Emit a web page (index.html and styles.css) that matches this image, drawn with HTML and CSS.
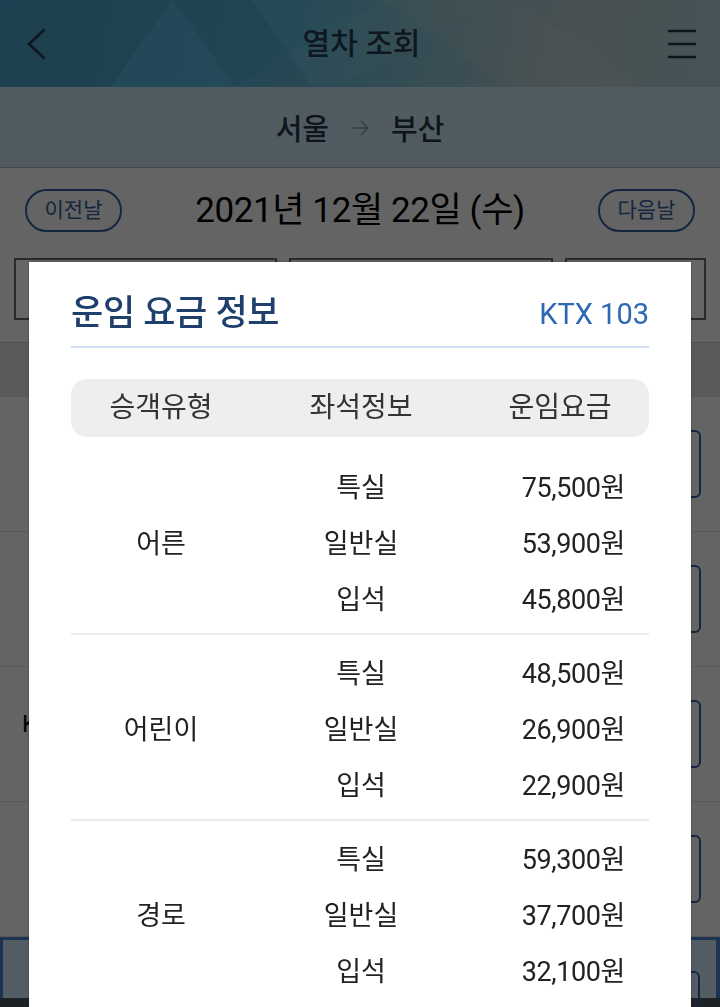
FILE: index.html
```html
<!DOCTYPE html>
<html lang="ko">
<head>
<meta charset="utf-8">
<title>열차 조회</title>
<link rel="stylesheet" href="styles.css">
</head>
<body>
<div class="app">
  <header class="topbar">
    <button class="icon-btn back" aria-label="뒤로">
      <svg width="20" height="32" viewBox="0 0 20 32"><path d="M17.5 1.5 L2 16 L17.5 30.5" fill="none" stroke="#20394b" stroke-width="2.6"/></svg>
    </button>
    <h1 class="topbar-title">열차 조회</h1>
    <button class="icon-btn menu" aria-label="메뉴">
      <svg width="28" height="30" viewBox="0 0 28 30"><path d="M0 2h28M0 15h28M0 28h28" stroke="#20394b" stroke-width="2.6"/></svg>
    </button>
  </header>

  <div class="route">
    <span>서울</span>
    <svg class="route-arrow" width="18" height="16" viewBox="0 0 18 16"><path d="M0 8h17M10 1l7 7-7 7" fill="none" stroke="#8d9da6" stroke-width="1.6"/></svg>
    <span>부산</span>
  </div>

  <section class="datebar">
    <div class="date-row">
      <button class="pill prev">이전날</button>
      <div class="date">2021년 12월 22일 (수)</div>
      <button class="pill next">다음날</button>
    </div>
    <div class="tabs">
      <div class="tab"></div>
      <div class="tab"></div>
      <div class="tab"></div>
    </div>
  </section>

  <div class="band"></div>

  <ul class="train-list">
    <li class="train"><span class="seat-btn"></span></li>
    <li class="train"><span class="seat-btn"></span></li>
    <li class="train"><span class="train-name">KTX 103</span><span class="seat-btn"></span></li>
    <li class="train"><span class="seat-btn"></span></li>
  </ul>

  <div class="bottom-bar"><span class="seat-btn small"></span></div>
  <div class="nav-bar"></div>
</div>

<div class="backdrop"></div>

<div class="modal" role="dialog" aria-labelledby="fare-title">
  <div class="modal-head">
    <h2 id="fare-title" class="modal-title">운임 요금 정보</h2>
    <span class="modal-train">KTX 103</span>
  </div>

  <div class="fare-head">
    <span>승객유형</span>
    <span>좌석정보</span>
    <span>운임요금</span>
  </div>

  <div class="fare-group">
    <span class="fare-type">어른</span>
    <span class="fare-seat">특실</span><span class="fare-price">75,500원</span>
    <span class="fare-seat">일반실</span><span class="fare-price">53,900원</span>
    <span class="fare-seat">입석</span><span class="fare-price">45,800원</span>
  </div>
  <div class="fare-group">
    <span class="fare-type">어린이</span>
    <span class="fare-seat">특실</span><span class="fare-price">48,500원</span>
    <span class="fare-seat">일반실</span><span class="fare-price">26,900원</span>
    <span class="fare-seat">입석</span><span class="fare-price">22,900원</span>
  </div>
  <div class="fare-group">
    <span class="fare-type">경로</span>
    <span class="fare-seat">특실</span><span class="fare-price">59,300원</span>
    <span class="fare-seat">일반실</span><span class="fare-price">37,700원</span>
    <span class="fare-seat">입석</span><span class="fare-price">32,100원</span>
  </div>
</div>
</body>
</html>
```

FILE: styles.css
```css
* { box-sizing: border-box; }

html, body {
  margin: 0;
  padding: 0;
}

body {
  width: 720px;
  height: 1007px;
  overflow: hidden;
  position: relative;
  font-family: "Roboto", "Noto Sans CJK KR", sans-serif;
  color: #111;
  background: #fafafa;
}

button {
  font-family: inherit;
  background: none;
  border: 0;
  padding: 0;
  cursor: pointer;
}

/* ---------- background page ---------- */
.app {
  display: flex;
  flex-direction: column;
  height: 1007px;
}

.topbar {
  height: 87px;
  flex: none;
  display: grid;
  grid-template-columns: 1fr auto 1fr;
  align-items: center;
  padding: 0 24px 0 27px;
  background:
    linear-gradient(125deg, rgba(10, 40, 70, 0.10) 0 22%, transparent 22% 100%),
    linear-gradient(55deg, transparent 0 30%, rgba(10, 40, 80, 0.08) 30% 40%, transparent 40% 100%),
    linear-gradient(150deg, transparent 0 44%, rgba(255, 255, 255, 0.05) 44% 56%, transparent 56% 100%),
    linear-gradient(35deg, transparent 0 60%, rgba(255, 225, 215, 0.10) 60% 76%, transparent 76% 100%),
    linear-gradient(100deg, #52aed6 0%, #5cb8dc 38%, #84c0d0 58%, #b4cad0 78%, #b0cfd8 100%);
}

.icon-btn { display: flex; align-items: center; }
.back { justify-self: start; }
.menu { justify-self: end; }

.topbar-title {
  margin: 0;
  font-size: 30px;
  font-weight: 500;
  line-height: 40px;
  color: #263e52;
}

.route {
  height: 81px;
  flex: none;
  display: flex;
  align-items: center;
  justify-content: center;
  gap: 22px;
  background: #c8e6f2;
  font-size: 29px;
  font-weight: 500;
  color: #243648;
  border-bottom: 1px solid #b4b4b4;
}

.route-arrow { margin-top: 2px; }

.datebar {
  flex: none;
  padding: 21px 14px 22px;
  background: #fafafa;
}

.date-row {
  display: grid;
  grid-template-columns: 1fr auto 1fr;
  align-items: center;
  padding: 0 11px;
  height: 43px;
}

.pill {
  width: 97px;
  height: 43px;
  border: 2px solid #34609f;
  border-radius: 22px;
  font-size: 21px;
  color: #34609f;
  line-height: 1;
}
.prev { justify-self: start; }
.next { justify-self: end; }

.date {
  font-size: 35px;
  line-height: 43px;
  color: #000;
  letter-spacing: -0.4px;
}

.tabs {
  margin-top: 26px;
  height: 62px;
  display: grid;
  grid-template-columns: 263px 264px 1fr;
  gap: 12px;
}

.tab {
  border: 2px solid #6a6a6a;
  background: #fff;
}

.band {
  height: 55px;
  flex: none;
  background: #e2e2e2;
  border-top: 1px solid #c2c2c2;
}

.train-list {
  list-style: none;
  margin: 0;
  padding: 0;
}

.train {
  height: 135px;
  border-bottom: 1px solid #dcdcdc;
  position: relative;
  padding: 42px 0 0 22px;
}

.train-name {
  font-size: 24px;
  line-height: 30px;
  color: #000;
}

.seat-btn {
  position: absolute;
  right: 19px;
  top: 33px;
  width: 90px;
  height: 68px;
  border: 2px solid #34609f;
  border-radius: 6px;
}

.bottom-bar {
  position: relative;
  height: 61px;
  flex: none;
  background: #d2e6fa;
  border: 3px solid #4a80cc;
  border-right-width: 4px;
  border-bottom: 0;
}

.seat-btn.small {
  top: 31px;
  right: 16px;
  height: 60px;
}

.nav-bar {
  flex: 1;
  background: #4b555f;
}

/* ---------- dialog ---------- */
.backdrop {
  position: fixed;
  inset: 0;
  background: rgba(0, 0, 0, 0.6);
}

.modal {
  position: absolute;
  top: 262px;
  left: 29px;
  width: 662px;
  height: 780px;
  background: #fff;
  box-shadow: 0 0 2px rgba(0, 0, 0, 0.35);
  padding: 30px 42px 0;
}

.modal-head {
  display: flex;
  justify-content: space-between;
  align-items: center;
  height: 56px;
  padding-bottom: 10px;
  border-bottom: 2px solid #cfe1f2;
}

.modal-title {
  margin: 0;
  font-size: 35px;
  font-weight: 500;
  line-height: 44px;
  color: #1f3f6d;
  letter-spacing: -0.3px;
}

.modal-train {
  font-size: 29px;
  line-height: 44px;
  color: #2d68b4;
}

.fare-head {
  margin-top: 31px;
  height: 58px;
  border-radius: 16px;
  background: #eeeeee;
  display: grid;
  grid-template-columns: 180px 220px 178px;
  align-items: center;
  text-align: center;
  font-size: 28px;
  line-height: 58px;
  color: #333;
  margin-bottom: 12px;
}

.fare-group {
  display: grid;
  grid-template-columns: 180px 220px 178px;
  grid-template-rows: repeat(3, 56px);
  align-items: center;
  padding: 8px 0;
  border-bottom: 2px solid #eaeaea;
  font-size: 27px;
  color: #222;
}

.fare-group:last-child { border-bottom: 0; }

.fare-type {
  grid-column: 1;
  grid-row: 1 / span 3;
  text-align: center;
}

.fare-seat {
  grid-column: 2;
  text-align: center;
}

.fare-price {
  grid-column: 3;
  text-align: right;
  padding-right: 24px;
  letter-spacing: -0.4px;
}
```
